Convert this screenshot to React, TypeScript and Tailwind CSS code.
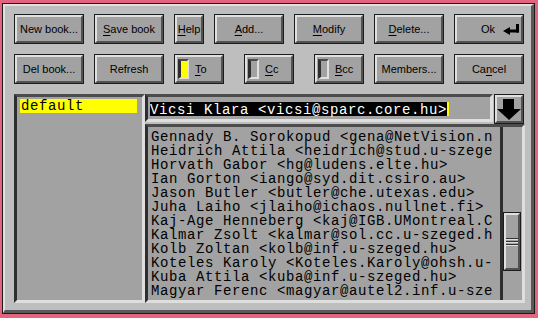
import type { ReactNode } from 'react';

const mono = "font-['Liberation_Mono','Courier_New',monospace] text-[14px] tracking-[0.6px]";
const sunken =
    'border-t-[3px] border-l-[3px] border-b-[3px] border-r-[3px] border-t-[#4c4c4c] border-l-[#2e2e2e] border-b-[#dedede] border-r-[#dedede]';

// only the part that fits in the list is shown
const entries = [
    'Gennady B. Sorokopud <gena@NetVision.n',
    'Heidrich Attila <heidrich@stud.u-szege',
    'Horvath Gabor <hg@ludens.elte.hu>',
    'Ian Gorton <iango@syd.dit.csiro.au>',
    'Jason Butler <butler@che.utexas.edu>',
    'Juha Laiho <jlaiho@ichaos.nullnet.fi>',
    'Kaj-Age Henneberg <kaj@IGB.UMontreal.C',
    'Kalmar Zsolt <kalmar@sol.cc.u-szeged.h',
    'Kolb Zoltan <kolb@inf.u-szeged.hu>',
    'Koteles Karoly <Koteles.Karoly@ohsh.u-',
    'Kuba Attila <kuba@inf.u-szeged.hu>',
    'Magyar Ferenc <magyar@autel2.inf.u-sze',
];

function Btn({
    w,
    justify = 'justify-center',
    children,
}: {
    w: string;
    justify?: string;
    children?: ReactNode;
}) {
    return (
        <div className={`h-[30px] shrink-0 border border-[#1c1c1c] ${w}`}>
            <div
                className={`flex h-full items-center ${justify} border-2 border-t-[#e0e0e0] border-l-[#e0e0e0] border-b-[#525252] border-r-[#525252] bg-[#a2a2a2] font-['Liberation_Sans',Arial,sans-serif] text-[11px] text-black`}
            >
                {children}
            </div>
        </div>
    );
}

function U({ children }: { children: ReactNode }) {
    return <span className="underline decoration-1 underline-offset-2">{children}</span>;
}

function Toggle({ on, children }: { on?: boolean; children: ReactNode }) {
    return (
        <Btn w="w-[50px]" justify="justify-start">
            <div
                className={`ml-[1px] h-[20px] w-[11px] border-t-2 border-b-2 border-l-[3px] border-r-[2px] border-t-[#4c4c4c] border-l-[#2e2e2e] border-b-[#e0e0e0] border-r-[#e0e0e0] ${on ? 'bg-[#ffff00]' : 'bg-[#a2a2a2]'}`}
            />
            <span className="ml-[6px]">{children}</span>
        </Btn>
    );
}

export default function App() {
    return (
        <div className="h-[318px] w-[538px] bg-[#e2647f] pt-[3px] pl-[2px] pr-[3px] pb-[4px]">
            <div className="h-full border border-[#1c1c1c]">
                <div className="h-full border-t-2 border-l-2 border-b-[3px] border-r-[3px] border-t-[#e0e0e0] border-l-[#e0e0e0] border-b-[#585858] border-r-[#585858] bg-[#bebebe] pl-[9px] pt-[8px]">
                    <div className="flex gap-[10px]">
                        <Btn w="w-[70px]">New book...</Btn>
                        <Btn w="w-[70px]">
                            <U>S</U>ave book
                        </Btn>
                        <Btn w="w-[30px]">
                            <U>H</U>elp
                        </Btn>
                        <Btn w="w-[70px]">
                            <U>A</U>dd...
                        </Btn>
                        <Btn w="w-[70px]">
                            <U>M</U>odify
                        </Btn>
                        <Btn w="w-[70px]">
                            <U>D</U>elete...
                        </Btn>
                        <Btn w="w-[70px]" justify="justify-end">
                            <span>Ok</span>
                            <svg width="16" height="11" viewBox="0 0 16 11" className="ml-[8px] mr-[2px]">
                                <polygon points="0,7 7,3 7,11" fill="#000" />
                                <rect x="6" y="5.5" width="10" height="3" fill="#000" />
                                <rect x="13" y="0" width="3" height="8.5" fill="#000" />
                            </svg>
                        </Btn>
                    </div>

                    <div className="mt-[10px] flex">
                        <Btn w="w-[70px]">Del book...</Btn>
                        <div className="ml-[10px]">
                            <Btn w="w-[70px]">Refresh</Btn>
                        </div>
                        <div className="ml-[10px]">
                            <Toggle on>
                                <U>T</U>o
                            </Toggle>
                        </div>
                        <div className="ml-[20px]">
                            <Toggle>
                                <U>C</U>c
                            </Toggle>
                        </div>
                        <div className="ml-[20px]">
                            <Toggle>
                                <U>B</U>cc
                            </Toggle>
                        </div>
                        <div className="ml-[10px]">
                            <Btn w="w-[70px]">Members...</Btn>
                        </div>
                        <div className="ml-[10px]">
                            <Btn w="w-[70px]">
                                Ca<U>n</U>cel
                            </Btn>
                        </div>
                    </div>

                    <div className="mt-[10px] flex h-[209px] w-[511px]">
                        <div className={`w-[131px] shrink-0 bg-[#a2a2a2] ${sunken}`}>
                            <div className={`ml-[3px] mt-[2px] h-[14px] w-[117px] bg-[#ffff00] pl-[1px] leading-[14px] text-black ${mono}`}>
                                default
                            </div>
                        </div>

                        <div className="flex flex-1 flex-col">
                            <div className="flex h-[30px]">
                                <div className={`h-[28px] flex-1 bg-[#a2a2a2] border-b-2 border-r-2 ${sunken}`}>
                                    <div className="flex pl-[2px] pt-[5px]">
                                        <span className={`h-[14px] bg-black leading-[17px] text-white ${mono}`}>
                                            Vicsi Klara &lt;vicsi@sparc.core.hu&gt;
                                        </span>
                                        <span className="h-[14px] w-[2px] bg-[#ffff00]" />
                                    </div>
                                </div>
                                <div className="ml-[1px] mr-[1px]">
                                    <Btn w="w-[30px]">
                                        <svg width="24" height="21" viewBox="0 0 24 21">
                                            <rect x="6" y="0" width="11" height="10.5" fill="#000" />
                                            <polygon points="0,10 24,10 12,21" fill="#000" />
                                        </svg>
                                    </Btn>
                                </div>
                            </div>

                            <div className={`flex flex-1 bg-[#a2a2a2] ${sunken}`}>
                                <div className="w-[352px] shrink-0 pl-[3px] pr-[7px] pt-[3px]">
                                    <div className={`whitespace-pre leading-[14px] text-black ${mono}`}>
                                        {entries.map((e) => (
                                            <div key={e}>{e}</div>
                                        ))}
                                    </div>
                                </div>
                                <div className="flex-1 border-l-[3px] border-l-[#2e2e2e]">
                                    <div className="mt-[85px] h-[59px] w-[18px] border border-[#1c1c1c]">
                                        <div className="flex h-full flex-col justify-center border-2 border-t-[#e0e0e0] border-l-[#e0e0e0] border-b-[#525252] border-r-[#525252] bg-[#a2a2a2]">
                                            <div className="mt-[1px] h-[1px] bg-[#333]" />
                                            <div className="h-[1px] bg-[#e0e0e0]" />
                                            <div className="mt-[1px] h-[1px] bg-[#333]" />
                                            <div className="h-[1px] bg-[#e0e0e0]" />
                                            <div className="mt-[1px] h-[1px] bg-[#333]" />
                                            <div className="h-[1px] bg-[#e0e0e0]" />
                                        </div>
                                    </div>
                                </div>
                            </div>
                        </div>
                    </div>
                </div>
            </div>
        </div>
    );
}
